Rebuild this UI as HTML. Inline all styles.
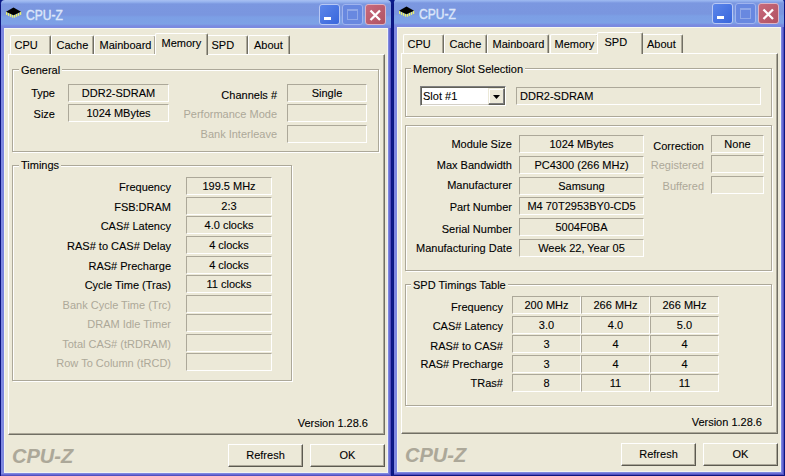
<!DOCTYPE html>
<html><head><meta charset="utf-8">
<style>
*{margin:0;padding:0;box-sizing:border-box}
html,body{width:785px;height:476px;overflow:hidden;background:#0a1a8a}
body{position:relative;font-family:"Liberation Sans",sans-serif;font-size:11px;color:#000;-webkit-text-stroke-width:0.1px}
div,svg,span{position:absolute}
.t{white-space:nowrap;line-height:13px}
.g{color:#aca899;-webkit-text-stroke-width:0}
.frame{width:392px;height:477px;background:#7e88e0;border:1px solid #0c1480;border-radius:5px 5px 0 0;box-shadow:inset -1px -1px 0 #5050c0,inset -2px -2px 0 #6a6cd4}
.tb{width:390px;height:28px;border-radius:4px 4px 0 0;
 background:linear-gradient(#a8c0f2 0,#95b2ee 2px,#7b97e0 4px,#7a96df 15px,#7c9fe5 17px,#7da1e6 24px,#7a8ae0 26px,#7a8ae0 28px)}
.ttl{font-size:14px;font-weight:normal;color:#dce6fa;-webkit-text-stroke-width:0.45px;line-height:16px;transform:scaleX(0.86);transform-origin:0 0}
.btn{width:21px;height:21px;border:1px solid #b8c8f4;border-radius:3px}
.bmin{background:linear-gradient(135deg,#5c86ea,#3866dc)}
.bmin .dash{left:4px;top:12px;width:7px;height:3px;background:#fff}
.bmax{background:#6888e0;border-color:#a0b4ee}
.bmax .sq{left:4px;top:4px;width:11px;height:11px;border:1px solid #90a8e8;border-top-width:2px}
.bcls{background:linear-gradient(135deg,#c86a7c,#b05262);border-color:#dcb4c4}
.client{width:384px;height:445px;background:#ece9d8;border-top:1px solid #f6f8f0;border-left:1px solid #f2f4ee;border-right:1px solid #f2f2f4;border-bottom:1px solid #f2f2f0}
.fld{border:1px solid;border-color:#aca899 #fff #fff #aca899;text-align:center;white-space:nowrap}
.grpw{border:1px solid #fff}
.grpd{border:1px solid #aca899}
.gt{background:#ece9d8;padding:0 2px;line-height:12px;white-space:nowrap}
.tab{background:#ece9d8;border-left:1px solid #fff;border-top:1px solid #fff;border-right:1px solid #716f64;box-shadow:inset -1px 0 0 #aca899;border-radius:2px 2px 0 0;white-space:nowrap}
.tab.sel{z-index:3}
.panel{border:1px solid;border-color:#fff #716f64 #716f64 #fff;box-shadow:inset -1px -1px 0 #aca899}
.pbtn{border:1px solid;border-color:#fff #5c5a50 #5c5a50 #fff;box-shadow:inset -1px -1px 0 #aca899;text-align:center;line-height:20px}
.logo{font-size:20px;font-weight:bold;font-style:italic;color:#aca899;line-height:22px}
</style></head><body>
<div class="frame" style="left:0px;top:0px"></div>
<div class="tb" style="left:1px;top:0px"></div>
<svg class="icon" style="left:6px;top:7px" width="16" height="12" viewBox="0 0 16 12">
<rect x="-0.1" y="4.7" width="1.3" height="3.2" fill="#e8f070"/><rect x="1.9" y="5.7" width="1.3" height="3.2" fill="#e8f070"/><rect x="3.9" y="6.6" width="1.3" height="3.2" fill="#e8f070"/><rect x="5.9" y="7.5" width="1.3" height="3.2" fill="#e8f070"/><rect x="7.9" y="7.5" width="1.3" height="3.2" fill="#e8f070"/><rect x="9.9" y="6.6" width="1.3" height="3.2" fill="#e8f070"/><rect x="11.9" y="5.7" width="1.3" height="3.2" fill="#e8f070"/><rect x="13.9" y="4.7" width="1.3" height="3.2" fill="#e8f070"/>
<path d="M7.5 0.5 L15 4.8 L7.5 8.3 L0 4.8 Z" fill="#000"/>
</svg>
<div class="ttl" style="left:26px;top:7px">CPU-Z</div>
<div class="btn bmin" style="left:319px;top:4px"><div class="dash"></div></div>
<div class="btn bmax" style="left:342px;top:4px"><div class="sq"></div></div>
<div class="btn bcls" style="left:365px;top:4px"><svg width="19" height="19" viewBox="0 0 19 18" style="position:absolute;left:0;top:1px"><path d="M4.5 4 L14 13.5 M14 4 L4.5 13.5" stroke="#fff" stroke-width="2.3"/></svg></div>
<div class="client" style="left:4px;top:28px"></div>
<div class="panel" style="left:8px;top:54px;width:377px;height:381px"></div>
<div class="logo" style="left:12px;top:445px">CPU-Z</div>
<div class="pbtn" style="left:228px;top:444px;width:75px;height:23px">Refresh</div>
<div class="pbtn" style="left:310px;top:444px;width:75px;height:23px">OK</div>
<div class="tab" style="left:10px;top:35px;width:41px;height:19px"><span class="t" style="left:3.5px;top:3px">CPU</span></div>
<div class="tab" style="left:51px;top:35px;width:43px;height:19px"><span class="t" style="left:4.5px;top:3px">Cache</span></div>
<div class="tab" style="left:94px;top:35px;width:62px;height:19px"><span class="t" style="left:4.5px;top:3px">Mainboard</span></div>
<div class="tab" style="left:206px;top:35px;width:42px;height:19px"><span class="t" style="left:4.5px;top:3px">SPD</span></div>
<div class="tab" style="left:248px;top:35px;width:42px;height:19px"><span class="t" style="left:5px;top:3px">About</span></div>
<div class="tab sel" style="left:155px;top:33px;width:53px;height:22px;background:#ece9d8"><span class="t" style="left:5.5px;top:3px">Memory</span></div>
<div class="grpw" style="left:13px;top:70px;width:367px;height:83px"></div>
<div class="grpd" style="left:12px;top:69px;width:367px;height:83px"></div>
<div class="gt" style="left:19px;top:64px">General</div>
<div class="t " style="left:-245px;top:87px;width:300px;text-align:right;">Type</div>
<div class="fld" style="left:68px;top:84px;width:101px;height:18px;line-height:16px;">DDR2-SDRAM</div>
<div class="t " style="left:-245px;top:108px;width:300px;text-align:right;">Size</div>
<div class="fld" style="left:68px;top:104px;width:101px;height:18px;line-height:16px;">1024 MBytes</div>
<div class="t " style="left:-23px;top:89px;width:300px;text-align:right;">Channels #</div>
<div class="fld" style="left:287px;top:84px;width:80px;height:18px;line-height:16px;">Single</div>
<div class="t g" style="left:-23px;top:108px;width:300px;text-align:right;">Performance Mode</div>
<div class="fld" style="left:287px;top:104px;width:80px;height:18px;line-height:16px;"></div>
<div class="t g" style="left:-23px;top:128px;width:300px;text-align:right;">Bank Interleave</div>
<div class="fld" style="left:287px;top:125px;width:80px;height:18px;line-height:16px;"></div>
<div class="grpw" style="left:13px;top:166px;width:280px;height:216px"></div>
<div class="grpd" style="left:12px;top:165px;width:280px;height:216px"></div>
<div class="gt" style="left:19px;top:159px">Timings</div>
<div class="t " style="left:-129px;top:181px;width:300px;text-align:right;">Frequency</div>
<div class="fld" style="left:186px;top:177px;width:86px;height:18px;line-height:16px;">199.5 MHz</div>
<div class="t " style="left:-129px;top:201px;width:300px;text-align:right;">FSB:DRAM</div>
<div class="fld" style="left:186px;top:197px;width:86px;height:18px;line-height:16px;">2:3</div>
<div class="t " style="left:-129px;top:220px;width:300px;text-align:right;">CAS# Latency</div>
<div class="fld" style="left:186px;top:216px;width:86px;height:18px;line-height:16px;">4.0 clocks</div>
<div class="t " style="left:-129px;top:240px;width:300px;text-align:right;">RAS# to CAS# Delay</div>
<div class="fld" style="left:186px;top:236px;width:86px;height:18px;line-height:16px;">4 clocks</div>
<div class="t " style="left:-129px;top:260px;width:300px;text-align:right;">RAS# Precharge</div>
<div class="fld" style="left:186px;top:256px;width:86px;height:18px;line-height:16px;">4 clocks</div>
<div class="t " style="left:-129px;top:279px;width:300px;text-align:right;">Cycle Time (Tras)</div>
<div class="fld" style="left:186px;top:275px;width:86px;height:18px;line-height:16px;">11 clocks</div>
<div class="t g" style="left:-129px;top:299px;width:300px;text-align:right;">Bank Cycle Time (Trc)</div>
<div class="fld" style="left:186px;top:295px;width:86px;height:18px;line-height:16px;"></div>
<div class="t g" style="left:-129px;top:318px;width:300px;text-align:right;">DRAM Idle Timer</div>
<div class="fld" style="left:186px;top:314px;width:86px;height:18px;line-height:16px;"></div>
<div class="t g" style="left:-129px;top:338px;width:300px;text-align:right;">Total CAS# (tRDRAM)</div>
<div class="fld" style="left:186px;top:334px;width:86px;height:18px;line-height:16px;"></div>
<div class="t g" style="left:-129px;top:357px;width:300px;text-align:right;">Row To Column (tRCD)</div>
<div class="fld" style="left:186px;top:353px;width:86px;height:18px;line-height:16px;"></div>
<div class="t " style="left:68px;top:417px;width:300px;text-align:right;">Version 1.28.6</div>
<div class="frame" style="left:393px;top:-1px"></div>
<div class="tb" style="left:394px;top:-1px"></div>
<svg class="icon" style="left:399px;top:6px" width="16" height="12" viewBox="0 0 16 12">
<rect x="-0.1" y="4.7" width="1.3" height="3.2" fill="#e8f070"/><rect x="1.9" y="5.7" width="1.3" height="3.2" fill="#e8f070"/><rect x="3.9" y="6.6" width="1.3" height="3.2" fill="#e8f070"/><rect x="5.9" y="7.5" width="1.3" height="3.2" fill="#e8f070"/><rect x="7.9" y="7.5" width="1.3" height="3.2" fill="#e8f070"/><rect x="9.9" y="6.6" width="1.3" height="3.2" fill="#e8f070"/><rect x="11.9" y="5.7" width="1.3" height="3.2" fill="#e8f070"/><rect x="13.9" y="4.7" width="1.3" height="3.2" fill="#e8f070"/>
<path d="M7.5 0.5 L15 4.8 L7.5 8.3 L0 4.8 Z" fill="#000"/>
</svg>
<div class="ttl" style="left:419px;top:6px">CPU-Z</div>
<div class="btn bmin" style="left:712px;top:3px"><div class="dash"></div></div>
<div class="btn bmax" style="left:735px;top:3px"><div class="sq"></div></div>
<div class="btn bcls" style="left:758px;top:3px"><svg width="19" height="19" viewBox="0 0 19 18" style="position:absolute;left:0;top:1px"><path d="M4.5 4 L14 13.5 M14 4 L4.5 13.5" stroke="#fff" stroke-width="2.3"/></svg></div>
<div class="client" style="left:397px;top:27px"></div>
<div class="panel" style="left:401px;top:53px;width:377px;height:381px"></div>
<div class="logo" style="left:405px;top:444px">CPU-Z</div>
<div class="pbtn" style="left:621px;top:443px;width:75px;height:23px">Refresh</div>
<div class="pbtn" style="left:703px;top:443px;width:75px;height:23px">OK</div>
<div class="tab" style="left:403px;top:34px;width:41px;height:19px"><span class="t" style="left:3.5px;top:3px">CPU</span></div>
<div class="tab" style="left:444px;top:34px;width:43px;height:19px"><span class="t" style="left:4.5px;top:3px">Cache</span></div>
<div class="tab" style="left:487px;top:34px;width:62px;height:19px"><span class="t" style="left:4.5px;top:3px">Mainboard</span></div>
<div class="tab" style="left:550px;top:34px;width:49px;height:19px"><span class="t" style="left:3.5px;top:3px">Memory</span></div>
<div class="tab" style="left:641px;top:34px;width:42px;height:19px"><span class="t" style="left:5px;top:3px">About</span></div>
<div class="tab sel" style="left:597px;top:32px;width:46px;height:22px;background:#ece9d8"><span class="t" style="left:6.5px;top:3px">SPD</span></div>
<div class="grpw" style="left:406px;top:69px;width:367px;height:49px"></div>
<div class="grpd" style="left:405px;top:68px;width:367px;height:49px"></div>
<div class="gt" style="left:411px;top:63px">Memory Slot Selection</div>
<div style="left:420px;top:86px;width:86px;height:20px;background:#fff;border:1px solid;border-color:#808080 #fff #fff #808080;box-shadow:inset 1px 1px 0 #606058,inset -1px -1px 0 #d4d0c8"><span style="left:2px;top:3px" class="t">Slot #1</span><div style="left:67px;top:1px;width:17px;height:17px;background:#ece9d8;border:1px solid;border-color:#ece9d8 #606058 #606058 #ece9d8;box-shadow:inset -1px -1px 0 #808080,inset 1px 1px 0 #fff"><svg width="15" height="15" viewBox="0 0 15 15"><path d="M4 6 L11 6 L7.5 10 Z" fill="#000"/></svg></div></div>
<div class="fld" style="left:516px;top:87px;width:245px;height:18px;line-height:16px;text-align:left;padding-left:3px">DDR2-SDRAM</div>
<div class="grpw" style="left:406px;top:126px;width:367px;height:146px"></div>
<div class="grpd" style="left:405px;top:125px;width:367px;height:146px"></div>
<div class="t " style="left:212px;top:138px;width:300px;text-align:right;">Module Size</div>
<div class="fld" style="left:519px;top:135px;width:125px;height:18px;line-height:16px;">1024 MBytes</div>
<div class="t " style="left:212px;top:159px;width:300px;text-align:right;">Max Bandwidth</div>
<div class="fld" style="left:519px;top:156px;width:125px;height:18px;line-height:16px;">PC4300 (266 MHz)</div>
<div class="t " style="left:212px;top:179px;width:300px;text-align:right;">Manufacturer</div>
<div class="fld" style="left:519px;top:177px;width:125px;height:18px;line-height:16px;">Samsung</div>
<div class="t " style="left:212px;top:201px;width:300px;text-align:right;">Part Number</div>
<div class="fld" style="left:519px;top:197px;width:125px;height:18px;line-height:16px;">M4 70T2953BY0-CD5</div>
<div class="t " style="left:212px;top:223px;width:300px;text-align:right;">Serial Number</div>
<div class="fld" style="left:519px;top:218px;width:125px;height:18px;line-height:16px;">5004F0BA</div>
<div class="t " style="left:212px;top:242px;width:300px;text-align:right;">Manufacturing Date</div>
<div class="fld" style="left:519px;top:239px;width:125px;height:18px;line-height:16px;">Week 22, Year 05</div>
<div class="t " style="left:404px;top:140px;width:300px;text-align:right;">Correction</div>
<div class="fld" style="left:711px;top:135px;width:53px;height:18px;line-height:16px;">None</div>
<div class="t g" style="left:404px;top:159px;width:300px;text-align:right;">Registered</div>
<div class="fld" style="left:711px;top:155px;width:53px;height:18px;line-height:16px;"></div>
<div class="t g" style="left:404px;top:180px;width:300px;text-align:right;">Buffered</div>
<div class="fld" style="left:711px;top:176px;width:53px;height:18px;line-height:16px;"></div>
<div class="grpw" style="left:406px;top:285px;width:367px;height:122px"></div>
<div class="grpd" style="left:405px;top:284px;width:367px;height:122px"></div>
<div class="gt" style="left:411px;top:279px">SPD Timings Table</div>
<div class="t " style="left:203px;top:301px;width:300px;text-align:right;">Frequency</div>
<div class="fld" style="left:512px;top:296px;width:69px;height:18px;line-height:16px;">200 MHz</div>
<div class="fld" style="left:581px;top:296px;width:69px;height:18px;line-height:16px;">266 MHz</div>
<div class="fld" style="left:650px;top:296px;width:69px;height:18px;line-height:16px;">266 MHz</div>
<div class="t " style="left:203px;top:320px;width:300px;text-align:right;">CAS# Latency</div>
<div class="fld" style="left:512px;top:316px;width:69px;height:18px;line-height:16px;">3.0</div>
<div class="fld" style="left:581px;top:316px;width:69px;height:18px;line-height:16px;">4.0</div>
<div class="fld" style="left:650px;top:316px;width:69px;height:18px;line-height:16px;">5.0</div>
<div class="t " style="left:203px;top:340px;width:300px;text-align:right;">RAS# to CAS#</div>
<div class="fld" style="left:512px;top:335px;width:69px;height:18px;line-height:16px;">3</div>
<div class="fld" style="left:581px;top:335px;width:69px;height:18px;line-height:16px;">4</div>
<div class="fld" style="left:650px;top:335px;width:69px;height:18px;line-height:16px;">4</div>
<div class="t " style="left:203px;top:358px;width:300px;text-align:right;">RAS# Precharge</div>
<div class="fld" style="left:512px;top:355px;width:69px;height:18px;line-height:16px;">3</div>
<div class="fld" style="left:581px;top:355px;width:69px;height:18px;line-height:16px;">4</div>
<div class="fld" style="left:650px;top:355px;width:69px;height:18px;line-height:16px;">4</div>
<div class="t " style="left:203px;top:377px;width:300px;text-align:right;">TRas#</div>
<div class="fld" style="left:512px;top:374px;width:69px;height:18px;line-height:16px;">8</div>
<div class="fld" style="left:581px;top:374px;width:69px;height:18px;line-height:16px;">11</div>
<div class="fld" style="left:650px;top:374px;width:69px;height:18px;line-height:16px;">11</div>
<div class="t " style="left:462px;top:416px;width:300px;text-align:right;">Version 1.28.6</div>
</body></html>
